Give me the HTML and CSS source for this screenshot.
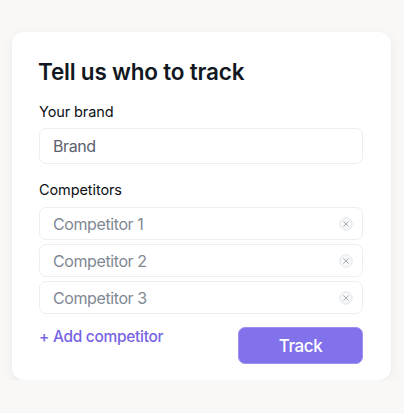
FILE: index.html
```html
<!DOCTYPE html>
<html>
<head>
<meta charset="utf-8">
<link rel="stylesheet" href="styles.css">
</head>
<body>
<div class="card">
  <h1 class="title">Tell us who to track</h1>
  <label class="label">Your brand</label>
  <div class="field field-brand"><span class="value">Brand</span></div>
  <label class="label label-comp">Competitors</label>
  <div class="list">
    <div class="field"><span class="ph">Competitor 1</span><span class="clear"><svg viewBox="0 0 14 14" width="14" height="14"><circle cx="7" cy="7" r="6.2" fill="#f7f8fa" stroke="#dde1e6" stroke-width="0.9"/><path d="M4.6 4.6L9.4 9.4M9.4 4.6L4.6 9.4" stroke="#a3abb5" stroke-width="0.95" stroke-linecap="round"/></svg></span></div>
    <div class="field"><span class="ph">Competitor 2</span><span class="clear"><svg viewBox="0 0 14 14" width="14" height="14"><circle cx="7" cy="7" r="6.2" fill="#f7f8fa" stroke="#dde1e6" stroke-width="0.9"/><path d="M4.6 4.6L9.4 9.4M9.4 4.6L4.6 9.4" stroke="#a3abb5" stroke-width="0.95" stroke-linecap="round"/></svg></span></div>
    <div class="field"><span class="ph">Competitor 3</span><span class="clear"><svg viewBox="0 0 14 14" width="14" height="14"><circle cx="7" cy="7" r="6.2" fill="#f7f8fa" stroke="#dde1e6" stroke-width="0.9"/><path d="M4.6 4.6L9.4 9.4M9.4 4.6L4.6 9.4" stroke="#a3abb5" stroke-width="0.95" stroke-linecap="round"/></svg></span></div>
  </div>
  <div class="actions">
    <a class="add">+ Add competitor</a>
    <button class="track">Track</button>
  </div>
</div>
</body>
</html>
```
FILE: styles.css
```css
html, body {
  margin: 0;
  padding: 0;
  background: #f9f8f6;
  font-family: Inter, "Noto Sans", sans-serif;
}
body {
  padding: 32px 13px 0 12px;
}
.card {
  width: 379px;
  box-sizing: border-box;
  background: #ffffff;
  border-radius: 12px;
  box-shadow: 0 4px 16px rgba(0, 0, 0, 0.05), 0 1px 3px rgba(0, 0, 0, 0.03);
  padding: 26px 28px 16px 27px;
  display: flex;
  flex-direction: column;
}
.title {
  margin: 0 0 0 -1px;
  font-size: 22.5px;
  line-height: 27px;
  font-weight: 600;
  color: #121821;
  letter-spacing: -0.2px;
}
.label {
  display: block;
  margin-top: 18px;
  font-size: 14.5px;
  line-height: 18px;
  font-weight: 400;
  color: #0c1015;
  letter-spacing: -0.1px;
}
.label-comp {
  margin-top: 17px;
}
.field {
  height: 33px;
  box-sizing: border-box;
  border: 1px solid #eceef2;
  border-radius: 7px;
  display: flex;
  align-items: center;
  justify-content: space-between;
  padding: 0 9px 0 13px;
  font-size: 16px;
  letter-spacing: -0.4px;
}
.field-brand {
  margin-top: 7px;
  height: 36px;
}
.value {
  color: #5b626c;
}
.ph {
  color: #7f8893;
}
.clear {
  display: flex;
}
.list {
  margin-top: 8px;
  display: flex;
  flex-direction: column;
  gap: 4px;
}
.actions {
  margin-top: 13px;
  display: flex;
  justify-content: space-between;
  align-items: flex-start;
}
.add {
  font-size: 15.5px;
  line-height: 20px;
  font-weight: 500;
  color: #7765e3;
  letter-spacing: -0.3px;
}
.track {
  width: 125px;
  height: 37px;
  border: 1px solid #9d90f1;
  border-radius: 7px;
  background: #8172ec;
  color: #ffffff;
  font-family: Inter, "Noto Sans", sans-serif;
  font-size: 17px;
  font-weight: 500;
  letter-spacing: -0.4px;
  padding: 0;
}
```
